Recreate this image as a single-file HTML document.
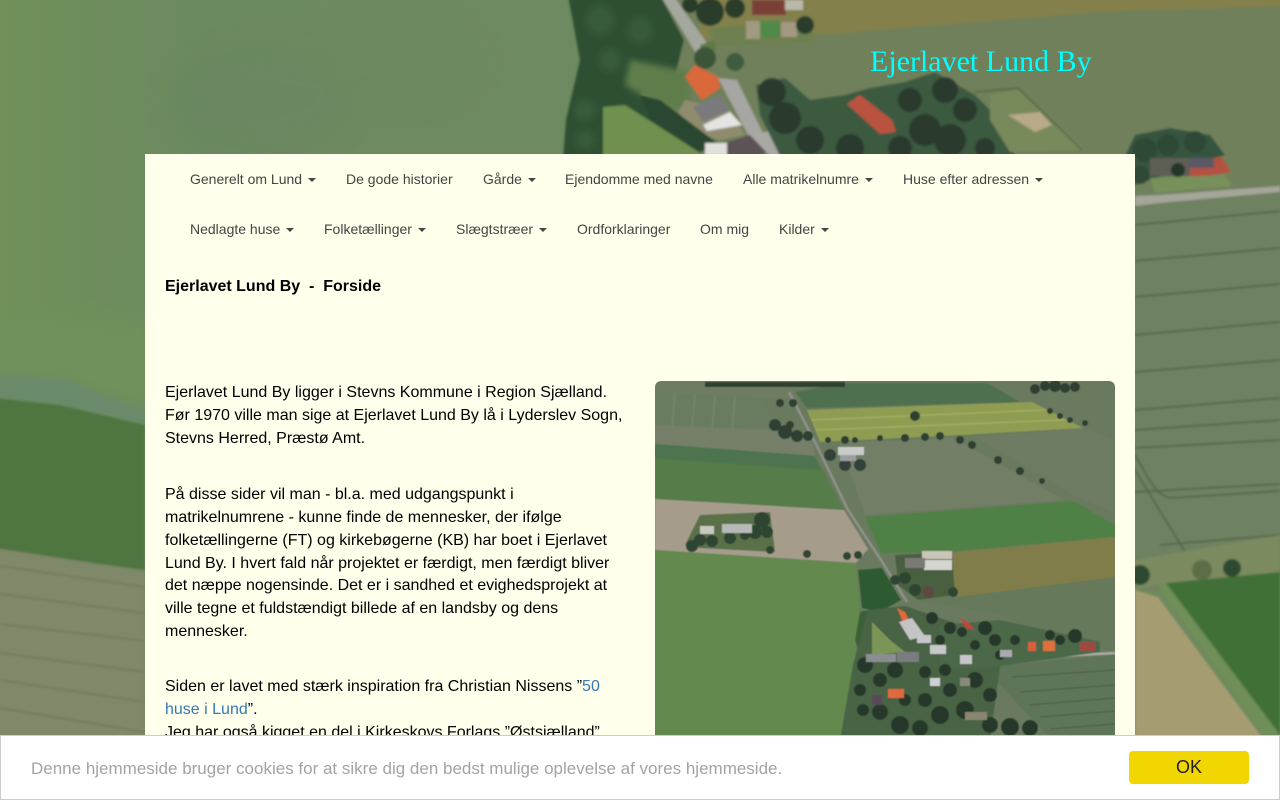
<!DOCTYPE html>
<html lang="da"><head><meta charset="utf-8"><title>Ejerlavet Lund By</title>
<style>
html,body{margin:0;padding:0;width:1280px;height:800px;overflow:hidden;background:#6f8a5e}
body{position:relative;font-family:"Liberation Sans",sans-serif;color:#000}
svg.bg{position:absolute;left:0;top:0}
#title{position:absolute;left:870px;top:41px;font:30px/42px "Liberation Serif",serif;color:#0ff;white-space:nowrap}
#panel{position:absolute;left:145px;top:154px;width:990px;height:646px;background:#ffffeb}
.nav{position:absolute;font-size:14px;line-height:20px;color:#444;white-space:nowrap}
.caret{display:inline-block;width:0;height:0;margin-left:2px;vertical-align:middle;border-top:4px solid #444;border-left:4px solid transparent;border-right:4px solid transparent}
.t{position:absolute;left:165px;font-size:16px;line-height:22.857px;white-space:nowrap;margin:0}
a{color:#337ab7;text-decoration:none}
#cookie{position:absolute;left:0;top:735px;width:1278px;height:63px;background:#fff;border:1px solid #ccc}
#cookie span{position:absolute;left:30px;top:22px;font-size:17px;line-height:22px;color:#a3a3a3;white-space:nowrap}
#ok{position:absolute;left:1128px;top:15px;width:120px;height:33px;background:#f2d600;border-radius:4px;font-size:18px;line-height:33px;text-align:center;color:#222}
</style></head><body>
<svg class="bg" width="1280" height="800" viewBox="0 0 1280 800" xmlns="http://www.w3.org/2000/svg">
<defs>
<filter id="b1" x="-5%" y="-5%" width="110%" height="110%"><feGaussianBlur stdDeviation="1"/></filter>
<filter id="b3" x="-5%" y="-5%" width="110%" height="110%"><feGaussianBlur stdDeviation="3"/></filter>
<filter id="b8" x="-20%" y="-20%" width="140%" height="140%"><feGaussianBlur stdDeviation="14"/></filter>
<linearGradient id="gl" x1="0" y1="0" x2="1" y2="0"><stop offset="0" stop-color="#729159"/><stop offset=".05" stop-color="#6f8f5c"/><stop offset=".3" stop-color="#6c8a5f"/><stop offset="1" stop-color="#6f8a60"/></linearGradient>
</defs>
<rect x="-5" y="-5" width="660" height="620" fill="url(#gl)"/>
<g filter="url(#b8)"><polygon points="-20,320 170,320 170,420 60,395 -20,385" fill="#6f915c"/></g>
<g filter="url(#b1)">
<polygon points="-5,375 60,378 145,410 145,426 60,405 -5,398" fill="#6a8a6c" filter="url(#b3)"/>
<polygon points="-5,398 60,405 145,425 145,570 -5,550" fill="#4f7440"/>
<polygon points="-5,548 145,571 145,810 -5,810" fill="#7f8868"/>
<g stroke="#6a7254" stroke-width="1.3" fill="none" opacity=".75">
<path d="M0 566L145 587M0 594L145 613M0 624L145 641M0 653L145 672M0 680L145 702M0 708L145 732"/></g>
<!-- right top fields -->
<rect x="650" y="-5" width="640" height="210" fill="#70805a"/>
<polygon points="700,-5 1290,-5 1290,6 1100,12 830,34 700,40" fill="#83804c"/>
<!-- right lower fields -->
<rect x="1130" y="190" width="155" height="400" fill="#6e8160"/>
<g stroke="#50604a" stroke-width="1.5" fill="none">
<path d="M1135 225L1280 211M1135 261L1280 248M1135 297L1280 284M1135 335L1280 322M1135 372L1280 360M1135 410L1280 398M1135 430L1280 420M1135 448L1280 440M1135 492L1280 484"/>
<path d="M1135 455C1150 480 1155 495 1170 498L1280 491M1135 470L1190 560M1160 545L1280 535"/></g>
<!-- road -->
<polygon points="1135,196 1160,195 1280,186 1280,192 1160,203 1135,206" fill="#a5a69a"/>
<!-- bottom right -->
<polygon points="1135,590 1158,597 1264,740 1135,740" fill="#a69c72"/>
<polygon points="1158,585 1166,583 1280,733 1266,738" fill="#708f58"/>
<polygon points="1166,583 1280,572 1280,735" fill="#3f7038"/>
<polygon points="1135,560 1280,535 1280,572 1166,583 1135,590" fill="#7c8b5e"/>
<g fill="#2f4a30"><circle cx="1202" cy="570" r="10" fill="#5b6e45"/><circle cx="1232" cy="568" r="9"/><circle cx="1140" cy="575" r="10"/></g>
<!-- forest -->
<polygon points="568,-5 660,-5 684,40 676,72 650,85 640,95 700,150 700,160 563,160 566,120 580,60" fill="#2f5033"/>
<g fill="#375c3a" filter="url(#b3)"><circle cx="600" cy="20" r="14"/><circle cx="640" cy="30" r="12"/><circle cx="610" cy="60" r="11"/><circle cx="585" cy="110" r="10"/><circle cx="585" cy="140" r="9"/></g>
<polygon points="603,107 625,105 705,156 603,158" fill="#6f9050"/>
<polygon points="630,60 690,72 690,115 650,100 625,85" fill="#5f7d4c" filter="url(#b3)"/>
<!-- road top -->
<polygon points="660,-5 673,-5 707,43 697,55 682,30" fill="#a4a79e"/>
<polygon points="700,45 716,40 716,50 704,58" fill="#5f7a45"/>
<!-- garden/top houses -->
<polygon points="708,28 810,20 815,42 716,46" fill="#6e8050"/>
<rect x="746" y="21" width="14" height="18" fill="#a09a80"/><rect x="760" y="21" width="20" height="16" fill="#4f8a4a"/><rect x="781" y="22" width="16" height="15" fill="#a59880"/>
<g fill="#2c3c2c"><circle cx="710" cy="12" r="14"/><circle cx="735" cy="8" r="10"/><circle cx="805" cy="25" r="9"/><circle cx="690" cy="5" r="8"/></g>
<rect x="752" y="0" width="34" height="15" fill="#7a4038"/><rect x="785" y="0" width="18" height="10" fill="#b9b9a9"/>
<!-- house 1 -->
<circle cx="705" cy="58" r="11" fill="#3a5538"/><circle cx="735" cy="62" r="9" fill="#3c5c3f"/>
<polygon points="718,78 737,80 764,135 748,135" fill="#a6a6a2"/>
<polygon points="685,100 678,112 700,135 720,140 745,135 730,110" fill="#8f8c6e"/>
<polygon points="685,77 695,65 718,77 720,88 702,100" fill="#d9683a"/>
<polygon points="693,107 720,95 730,110 703,122" fill="#7a7a7c"/>
<polygon points="703,125 730,112 742,125 707,131" fill="#e4e4e2"/>
<polygon points="640,95 660,100 720,145 700,152 650,118" fill="#2b4630"/>
<rect x="705" y="143" width="22" height="12" fill="#e0e0dc"/>
<polygon points="727,142 750,135 770,150 760,156 727,156" fill="#5d5256"/>
<polygon points="750,135 775,130 790,156 770,156" fill="#a8a8a4"/>
<!-- tree mass centre -->
<polygon points="756,85 785,78 810,100 845,95 870,88 905,82 935,72 975,95 1000,120 1015,156 780,156 760,115" fill="#3a5a40"/>
<g fill="#2b3b2d">
<circle cx="772" cy="92" r="14"/><circle cx="785" cy="118" r="16"/><circle cx="810" cy="140" r="14"/><circle cx="850" cy="148" r="14"/><circle cx="900" cy="148" r="12"/><circle cx="925" cy="130" r="16"/><circle cx="910" cy="100" r="12"/><circle cx="945" cy="90" r="13"/><circle cx="965" cy="110" r="12"/><circle cx="950" cy="140" r="16"/><circle cx="985" cy="148" r="10"/>
</g>
<!-- red house -->
<polygon points="847,104 860,95 892,120 896,132 880,134" fill="#b9533f"/>
<!-- sand plot -->
<polygon points="990,95 1020,90 1085,150 1010,152 990,120" fill="#788a5c"/>
<polygon points="1008,115 1040,112 1052,125 1035,132" fill="#b8a988"/>
<path d="M975 92L1018 88L1082 150" stroke="#4f5c40" stroke-width="1.3" fill="none"/>
<!-- right farm -->
<polygon points="1125,156 1135,135 1170,128 1210,135 1225,155 1135,185" fill="#355540"/>
<g fill="#2e4a36"><circle cx="1145" cy="150" r="12"/><circle cx="1168" cy="145" r="11"/><circle cx="1195" cy="142" r="11"/><circle cx="1140" cy="175" r="9"/></g>
<rect x="1150" y="158" width="42" height="18" fill="#5d5f54"/>
<polygon points="1190,160 1222,157 1231,172 1190,179" fill="#b5513f"/><rect x="1190" y="158" width="24" height="10" fill="#5c5865"/>
<circle cx="1178" cy="170" r="7" fill="#25352a"/>
<polygon points="1150,178 1225,175 1232,186 1155,193" fill="#78905a"/>
</g>
<!-- mottling -->
<g filter="url(#b8)" opacity=".25">
<ellipse cx="260" cy="100" rx="90" ry="50" fill="#63816a"/><ellipse cx="400" cy="60" rx="80" ry="40" fill="#6b8a5a"/>
</g>
</svg>

<div id="title">Ejerlavet Lund By</div>
<div id="panel"></div>

<div class="nav" style="left:190px;top:169px">Generelt om Lund <span class="caret"></span></div>
<div class="nav" style="left:346px;top:169px">De gode historier</div>
<div class="nav" style="left:483px;top:169px">Gårde <span class="caret"></span></div>
<div class="nav" style="left:565px;top:169px">Ejendomme med navne</div>
<div class="nav" style="left:743px;top:169px">Alle matrikelnumre <span class="caret"></span></div>
<div class="nav" style="left:903px;top:169px">Huse efter adressen <span class="caret"></span></div>
<div class="nav" style="left:190px;top:219px">Nedlagte huse <span class="caret"></span></div>
<div class="nav" style="left:324px;top:219px">Folketællinger <span class="caret"></span></div>
<div class="nav" style="left:456px;top:219px">Slægtstræer <span class="caret"></span></div>
<div class="nav" style="left:577px;top:219px">Ordforklaringer</div>
<div class="nav" style="left:700px;top:219px">Om mig</div>
<div class="nav" style="left:779px;top:219px">Kilder <span class="caret"></span></div>

<p class="t" style="top:276px;font-weight:bold">Ejerlavet Lund By&nbsp; -&nbsp; Forside</p>
<p class="t" style="top:382px">Ejerlavet Lund By ligger i Stevns Kommune i Region Sjælland.<br>Før 1970 ville man sige at Ejerlavet Lund By lå i Lyderslev Sogn,<br>Stevns Herred, Præstø Amt.</p>
<p class="t" style="top:484px">På disse sider vil man - bl.a. med udgangspunkt i<br>matrikelnumrene - kunne finde de mennesker, der ifølge<br>folketællingerne (FT) og kirkebøgerne (KB) har boet i Ejerlavet<br>Lund By. I hvert fald når projektet er færdigt, men færdigt bliver<br>det næppe nogensinde. Det er i sandhed et evighedsprojekt at<br>ville tegne et fuldstændigt billede af en landsby og dens<br>mennesker.</p>
<p class="t" style="top:676px">Siden er lavet med stærk inspiration fra Christian Nissens ”<a>50<br>huse i Lund</a>”.<br>Jeg har også kigget en del i Kirkeskovs Forlags ”Østsjælland”</p>

<svg style="position:absolute;left:655px;top:381px" width="460" height="419" viewBox="655 381 460 419" xmlns="http://www.w3.org/2000/svg">
<defs><clipPath id="rc"><rect x="655" y="381" width="460" height="430" rx="6"/></clipPath>
<filter id="b2" x="-5%" y="-5%" width="110%" height="110%"><feGaussianBlur stdDeviation=".5"/></filter></defs>
<g clip-path="url(#rc)"><g filter="url(#b2)">
<rect x="650" y="375" width="470" height="430" fill="#6a7a5e"/>
<polygon points="655,381 800,381 810,400 655,392" fill="#6e7d62"/>
<polygon points="655,392 762,398 775,432 655,425" fill="#6a7c60"/>
<g stroke="#7c8a70" stroke-width="1"><path d="M675 393L672 427M695 394L692 428M715 396L712 429M735 397L732 430"/></g>
<polygon points="655,425 775,430 813,442 815,456 655,444" fill="#747f6a"/>
<polygon points="655,444 815,456 844,510 655,499" fill="#547b48"/>
<polygon points="655,444 815,456 820,470 655,458" fill="#4d7350"/>
<polygon points="655,499 844,510 868,549 856,563 655,550" fill="#a59c8c"/>
<polygon points="655,550 856,563 860,607 854,670 840,740 655,740" fill="#64894f"/>
<polygon points="795,392 844,383 987,383 1020,402 807,408" fill="#4f7050"/>
<polygon points="807,410 1032,402 1083,428 960,435 820,442" fill="#8f9d52"/>
<g stroke="#a2ad62" stroke-width="1.5"><path d="M812 420L1045 410M816 430L1065 420"/></g>
<polygon points="840,443 954,438 1064,500 865,515" fill="#727e66"/>
<polygon points="975,437 1083,428 1115,440 1115,513 1077,497" fill="#6d7b62"/>
<polygon points="1036,395 1115,393 1115,430 1089,427" fill="#6a7a5e"/>
<polygon points="865,517 1073,501 1115,525 1115,537 946,552 881,553" fill="#4f8045"/>
<polygon points="946,553 1115,537 1115,577 958,597" fill="#807d4c"/>
<polygon points="918,600 958,597 1115,577 1115,652 1060,640 1000,615" fill="#66795a"/>
<polygon points="983,667 1115,655 1115,740 1052,740" fill="#5e7558"/>
<g stroke="#4c5c45" stroke-width="1"><path d="M1012 677L1115 670M1020 692L1115 685M1030 705L1115 698M1040 717L1115 711M1050 729L1115 724"/></g>
<!-- road -->
<polyline points="789,392 815,442 848,510 881,560 907,602" fill="none" stroke="#8f918a" stroke-width="2.5"/>
<polyline points="983,667 1040,657 1115,653" fill="none" stroke="#a8aaa0" stroke-width="2.5"/>
<!-- top tree row -->
<rect x="705" y="382" width="140" height="5" fill="#2d3f32"/>
<g fill="#2f4033"><circle cx="1045" cy="386" r="5"/><circle cx="1055" cy="386" r="6"/><circle cx="1065" cy="388" r="5"/><circle cx="1035" cy="389" r="5"/><circle cx="1075" cy="387" r="5"/>
<circle cx="828" cy="440" r="3"/><circle cx="845" cy="440" r="4"/><circle cx="855" cy="440" r="3"/><circle cx="880" cy="438" r="3"/><circle cx="905" cy="438" r="4"/><circle cx="925" cy="437" r="4"/><circle cx="940" cy="436" r="4"/>
<circle cx="960" cy="440" r="4"/><circle cx="972" cy="445" r="4"/><circle cx="998" cy="460" r="4"/><circle cx="1020" cy="471" r="4"/><circle cx="1042" cy="481" r="3"/>
<circle cx="1050" cy="411" r="3"/><circle cx="1060" cy="416" r="3"/><circle cx="1070" cy="420" r="3"/><circle cx="1085" cy="423" r="3"/>
<circle cx="775" cy="425" r="6"/><circle cx="785" cy="432" r="7"/><circle cx="797" cy="436" r="6"/><circle cx="808" cy="436" r="5"/><circle cx="790" cy="425" r="4"/>
<circle cx="780" cy="403" r="4"/><circle cx="793" cy="403" r="4"/><circle cx="915" cy="416" r="5"/></g>
<rect x="838" y="447" width="26" height="8" fill="#c8ccc8"/>
<g fill="#33423a"><circle cx="830" cy="455" r="6"/><circle cx="845" cy="465" r="6"/><circle cx="860" cy="465" r="6"/></g><rect x="840" y="455" width="16" height="6" fill="#9c9fa0"/>
<!-- farm on tan -->
<polygon points="685,545 700,515 770,512 775,552 700,548" fill="#5a7048"/>
<g fill="#2f4430"><circle cx="762" cy="520" r="8"/><circle cx="755" cy="532" r="7"/><circle cx="767" cy="532" r="6"/><circle cx="700" cy="540" r="6"/><circle cx="692" cy="546" r="6"/><circle cx="712" cy="541" r="6"/><circle cx="730" cy="538" r="6"/><circle cx="745" cy="535" r="5"/><circle cx="770" cy="550" r="4"/><circle cx="807" cy="554" r="4"/><circle cx="847" cy="556" r="4"/><circle cx="858" cy="555" r="4"/></g>
<rect x="722" y="524" width="30" height="9" fill="#b6bab6"/><rect x="700" y="526" width="14" height="8" fill="#c8c8c0"/>
<!-- farm 3 -->
<polygon points="895,555 952,552 955,595 918,600 898,585" fill="#4a6040"/>
<rect x="922" y="551" width="30" height="8" fill="#c9c5b8"/><rect x="924" y="560" width="28" height="10" fill="#d5d5d0"/><rect x="905" y="558" width="20" height="10" fill="#7c7a74"/>
<g fill="#2f4430"><circle cx="905" cy="578" r="6"/><circle cx="915" cy="590" r="6"/><circle cx="895" cy="580" r="5"/><circle cx="928" cy="592" r="6" fill="#5d4a40"/><circle cx="953" cy="592" r="5"/></g>
<!-- orchard -->
<polygon points="858,570 882,568 901,600 880,612 862,608" fill="#2f5a30"/>
<polygon points="860,612 868,610 870,640 860,655 855,640" fill="#3a6038"/>
<!-- village -->
<polygon points="868,610 905,606 990,635 1000,667 990,740 840,740 853,665" fill="#4a6344"/>
<polygon points="872,622 890,640 905,652 872,655" fill="#7a9554"/>
<polygon points="940,625 1000,620 1100,642 1100,652 985,668 940,668" fill="#4c6848"/>
<g fill="#27382b"><circle cx="932" cy="618" r="6"/><circle cx="950" cy="628" r="6"/><circle cx="985" cy="628" r="7"/><circle cx="995" cy="640" r="6"/><circle cx="962" cy="632" r="5"/><circle cx="1060" cy="640" r="5"/><circle cx="1075" cy="636" r="7"/><circle cx="1050" cy="635" r="5"/><circle cx="1015" cy="640" r="5"/><circle cx="1000" cy="655" r="5"/><circle cx="940" cy="640" r="5"/><circle cx="975" cy="645" r="5"/>
<circle cx="865" cy="665" r="8"/><circle cx="880" cy="680" r="7"/><circle cx="895" cy="670" r="8"/><circle cx="925" cy="672" r="6"/><circle cx="950" cy="690" r="7"/><circle cx="975" cy="680" r="8"/><circle cx="990" cy="695" r="7"/><circle cx="965" cy="710" r="9"/><circle cx="940" cy="715" r="9"/><circle cx="900" cy="725" r="9"/><circle cx="880" cy="712" r="8"/><circle cx="990" cy="725" r="8"/><circle cx="1010" cy="727" r="9"/><circle cx="1030" cy="728" r="8"/><circle cx="863" cy="710" r="6"/><circle cx="925" cy="700" r="7"/><circle cx="905" cy="700" r="6"/><circle cx="945" cy="670" r="6"/><circle cx="920" cy="728" r="8"/><circle cx="860" cy="690" r="6"/></g>
<polygon points="897,608 905,612 909,620 903,622" fill="#e06a3a"/><polygon points="899,622 912,618 925,636 910,640" fill="#c4c4c4"/>
<polygon points="960,618 968,622 975,630 966,628" fill="#c0443a"/>
<rect x="1043" y="641" width="12" height="10" fill="#e0703a"/><rect x="1028" y="642" width="8" height="9" fill="#d8603a"/>
<rect x="1080" y="642" width="15" height="9" fill="#a04a40"/>
<rect x="866" y="654" width="30" height="8" fill="#8a8e90"/><rect x="897" y="652" width="22" height="10" fill="#7a7c80"/>
<rect x="930" y="645" width="16" height="9" fill="#c8c8cc"/><rect x="917" y="635" width="14" height="8" fill="#c6c6ca"/><rect x="960" y="655" width="12" height="9" fill="#c6c6c8"/><rect x="1000" y="650" width="12" height="7" fill="#aaaaae"/>
<rect x="888" y="689" width="16" height="9" fill="#df6a3a"/><rect x="872" y="695" width="10" height="10" fill="#5a4a5a"/><rect x="930" y="678" width="10" height="8" fill="#d0d0d4"/><rect x="960" y="678" width="10" height="8" fill="#8a8a7a"/><rect x="965" y="712" width="22" height="8" fill="#8a8570"/>
</g></g></svg>

<div id="cookie"><span>Denne hjemmeside bruger cookies for at sikre dig den bedst mulige oplevelse af vores hjemmeside.</span><div id="ok">OK</div></div>
</body></html>
